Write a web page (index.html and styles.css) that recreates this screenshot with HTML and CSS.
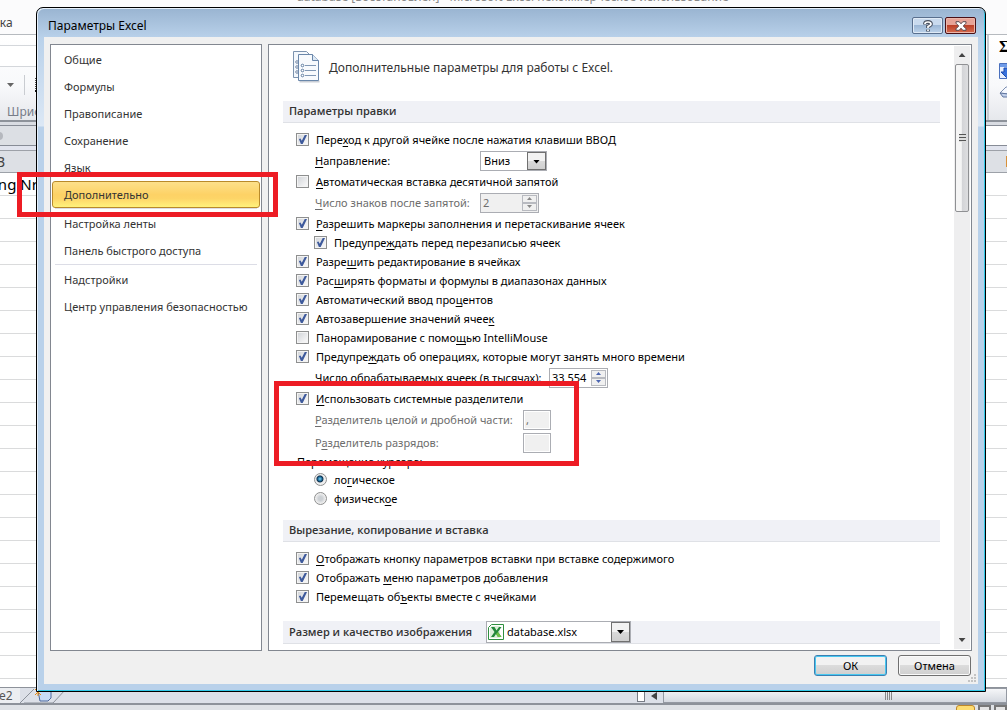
FILE: index.html
```html
<!DOCTYPE html>
<html lang="ru">
<head>
<meta charset="utf-8">
<title>Параметры Excel</title>
<link rel="stylesheet" href="styles.css">
</head>
<body>
<div class="app">
  <div class="app-top">
    <div class="app-title">database [восстановлен] - Microsoft Excel некоммерческое использование</div>
    <div class="app-tab">вка</div>
  </div>
  <div class="ribbon">
    <div class="ribbon-font">
      <div class="ribbon-combo"></div>
      <div class="ribbon-tools">
        <svg width="7" height="4" viewBox="0 0 7 4"><path d="M0 0h7L3.500 4z" fill="#666"/></svg>
        <i class="ribbon-sep"></i>
        <svg width="12" height="14" viewBox="0 0 12 14"><path d="M.5 0v12M4 .5h8M5 6.500h7" stroke="#555" stroke-dasharray="1 1" fill="none"/><path d="M0 13h12" stroke="#111" stroke-width="2"/></svg>
      </div>
      <div class="ribbon-caption">Шрифт</div>
    </div>
    <div class="ribbon-edit">
      <div class="sigma">Σ</div>
      <svg width="16" height="16" viewBox="0 0 16 16"><path d="M.5 .5h15v15H.5z" fill="#e8f0ff" stroke="#4a70bd"/><path d="M1 1h15v3H1z" fill="#6f9be8"/><path d="M5 5h5v4h3l-5.500 5.500L2 9h3z" fill="#3973dc" stroke="#1a4baf"/></svg>
      <svg width="16" height="12" viewBox="0 0 16 12"><path d="M1 7l6-6h8L9 8z" fill="#f5f8ff" stroke="#7d8fb1"/><path d="M1 7l8 1v3H4z" fill="#c2d0eb" stroke="#60769f"/></svg>
    </div>
  </div>
  <div class="formula-bar"><span class="knob"></span><span class="formula-field"></span></div>
  <div class="col-head"><span>B</span><i></i></div>
  <div class="sheet"><span>ing Nr</span></div>
  <div class="sheet-tabs">
    <span class="tab-name">le2</span>
    <svg class="tab-new" width="46" height="16" viewBox="0 0 46 16"><path d="M0 15L14 1M4 15h29L46 1" fill="none" stroke="#8c929b"/><path d="M18 3h13v7l-3 3h-8z" fill="#c9dcf6" stroke="#4c689c"/><path d="M15 1l3 3 3-3M15 7l3-3 3 3M18 1v7" stroke="#e58a14" fill="none"/></svg>
    <div class="hscroll"><i class="split"></i><svg width="6" height="8" viewBox="0 0 6 8"><path d="M6 0v8L0 4z" fill="#444"/></svg><div class="hthumb"><i></i></div></div>
  </div>
  <div class="status"><i class="view on"></i><i class="view"></i><i class="view"></i></div>
</div>

<div class="dialog" role="dialog" aria-labelledby="dlg-title">
  <div class="titlebar">
    <span id="dlg-title">Параметры Excel</span>
    <button class="win-btn help" aria-label="Справка"><svg width="10" height="12" viewBox="0 0 10 12"><path d="M2 4.500V3.500Q2.300 2 5 2T8 4Q8 5.300 5 6.500V8M5 9.500v2" fill="none" stroke="#4a5261" stroke-width="3.800"/><path d="M2 4V3.500Q2.300 2 5 2T8 4Q8 5.300 5 6.500V8M5 9.500v1.500" fill="none" stroke="#fff" stroke-width="1.700"/></svg></button>
    <button class="win-btn close" aria-label="Закрыть"><svg width="12" height="10" viewBox="0 0 12 10"><path d="M1 .7h3.200L6 2.800 7.800.7H11v1.500L8.300 5 11 7.800v1.500H7.800L6 7.200 4.200 9.300H1V7.800L3.700 5 1 2.200z" fill="#fff" stroke="#5a4a50"/></svg></button>
  </div>
  <div class="dlg-body">
    <div class="panes">
      <nav class="nav">
        <button>Общие</button>
        <button>Формулы</button>
        <button>Правописание</button>
        <button>Сохранение</button>
        <button>Язык</button>
        <button class="active">Дополнительно</button>
        <hr>
        <button>Настройка ленты</button>
        <button>Панель быстрого доступа</button>
        <hr>
        <button>Надстройки</button>
        <button>Центр управления безопасностью</button>
      </nav>
      <main class="options">
        <div class="content">
          <header class="intro">
            <svg width="30" height="33" viewBox="0 0 30 33"><path d="M1.500 1.500h13l4 4v22h-17z" fill="#f4f8fc" stroke="#7c93ae"/><g fill="none" stroke="#7c8eaa"><circle cx="5" cy="12" r="1.300"/><circle cx="5" cy="17" r="1.300"/><circle cx="5" cy="22" r="1.300"/></g><path d="M7.500 31.500h20" stroke="#c8cdd5" stroke-width="2"/><path d="M6.500 4.500h14l6 6v20h-20z" fill="#f7fafd" stroke="#6a87aa"/><path d="M20.500 4.500v6h6" fill="#dce8f4" stroke="#6a87aa"/><g fill="#fff" stroke="#5c7ba0"><circle cx="10.500" cy="15.500" r="1.300"/><circle cx="10.500" cy="20.500" r="1.300"/><circle cx="10.500" cy="25.500" r="1.300"/></g><path d="M13 15.500h11M13 20.500h11M13 25.500h11" stroke="#7f97b4"/></svg>
            <span>Дополнительные параметры для работы с Excel.</span>
          </header>

          <h2>Параметры правки</h2>
          <div class="group">
            <label class="row"><input type="checkbox" checked><span>Пере<u>х</u>од к другой ячейке после нажатия клавиши ВВОД</span></label>
            <div class="sub">
              <label class="w-short" for="dir"><u>Н</u>аправление:</label>
              <span class="combo combo-dir"><select id="dir"><option>Вниз</option></select><i class="arrow"></i></span>
            </div>
            <label class="row"><input type="checkbox"><span><u>А</u>втоматическая вставка десятичной запятой</span></label>
            <div class="sub off">
              <label class="w-short" for="digits"><u>Ч</u>исло знаков после запятой:</label>
              <span class="spin"><input id="digits" type="text" value="2" disabled><span class="arrows"><i class="up"></i><i class="down"></i></span></span>
            </div>
            <label class="row"><input type="checkbox" checked><span><u>Р</u>азрешить маркеры заполнения и перетаскивание ячеек</span></label>
            <label class="row nested"><input type="checkbox" checked><span>Предупре<u>ж</u>дать перед перезаписью ячеек</span></label>
            <label class="row"><input type="checkbox" checked><span>Разре<u>ш</u>ить редактирование в ячейках</span></label>
            <label class="row"><input type="checkbox" checked><span>Рас<u>ш</u>ирять форматы и формулы в диапазонах данных</span></label>
            <label class="row"><input type="checkbox" checked><span>Автоматический ввод про<u>ц</u>ентов</span></label>
            <label class="row"><input type="checkbox" checked><span>Автозавершение значений ячее<u>к</u></span></label>
            <label class="row"><input type="checkbox"><span>Панорамирование с помо<u>щ</u>ью IntelliMouse</span></label>
            <label class="row"><input type="checkbox" checked><span>Предупре<u>ж</u>дать об операциях, которые могут занять много времени</span></label>
            <div class="sub">
              <label class="w-long" for="cells">Число обрабатываемых ячеек (в тысячах):</label>
              <span class="spin"><input id="cells" type="text" value="33 554"><span class="arrows"><i class="up"></i><i class="down"></i></span></span>
            </div>
            <label class="row"><input type="checkbox" checked><span><u>И</u>спользовать системные разделители</span></label>
            <div class="sub off">
              <label class="w-mid" for="dec"><u>Р</u>азделитель целой и дробной части:</label>
              <input class="tiny" id="dec" type="text" value="," disabled>
            </div>
            <div class="sub off">
              <label class="w-mid" for="thou">Р<u>а</u>зделитель разрядов:</label>
              <input class="tiny" id="thou" type="text" value="" disabled>
            </div>
            <div class="caption">Перемещение курсора:</div>
            <label class="row nested"><input type="radio" name="cursor" checked><span>ло<u>г</u>ическое</span></label>
            <label class="row nested"><input type="radio" name="cursor"><span>физическ<u>о</u>е</span></label>
          </div>

          <h2>Вырезание, копирование и вставка</h2>
          <div class="group">
            <label class="row"><input type="checkbox" checked><span><u>О</u>тображать кнопку параметров вставки при вставке содержимого</span></label>
            <label class="row"><input type="checkbox" checked><span>Отображать <u>м</u>еню параметров добавления</span></label>
            <label class="row"><input type="checkbox" checked><span>Перемещать об<u>ъ</u>екты вместе с ячейками</span></label>
          </div>

          <h2 class="with-combo"><label for="book">Размер и качество изображения</label>
            <span class="combo combo-book">
              <svg width="16" height="16" viewBox="0 0 16 16"><path d="M3.500 .5h12v15H.5v-12z" fill="#fff" stroke="#2f8f3f"/><path d="M2 4l2-2h8v12H2z" fill="#dcefd9"/><path d="M3 3h3.500l2 3.500L11 3h2.500L10 8l3.500 5H10L8 10l-2 3H3l3.500-5z" fill="#23883a"/><path d="M10 8l3.500 5H10L8 10z" fill="#6cbf45"/></svg>
              <select id="book"><option>database.xlsx</option></select><i class="arrow"></i>
            </span>
          </h2>
        </div>
        <div class="scrollbar"><i class="sb-up"></i><div class="sb-thumb"><i></i></div><i class="sb-down"></i></div>
      </main>
    </div>
    <footer class="actions">
      <button class="btn primary">ОК</button>
      <button class="btn">Отмена</button>
      <svg class="grip" width="9" height="9" viewBox="0 0 9 9"><path d="M6 0h2v2H6zM3 3h2v2H3zM6 3h2v2H6zM0 6h2v2H0zM3 6h2v2H3zM6 6h2v2H6z" fill="#c3c3c3"/></svg>
    </footer>
  </div>
</div>
<div class="mark mark-nav"></div>
<div class="mark mark-sep"></div>
</body>
</html>
```

FILE: styles.css
```css
* { box-sizing: border-box; }
html, body { height: 100%; margin: 0; }
body {
  position: relative;
  overflow: hidden;
  font: 11px/16px "Noto Sans", "Open Sans", sans-serif;
  color: #000;
  background: #fff;
}
button, input, select { font: inherit; color: inherit; margin: 0; }
svg, i { display: block; flex: none; }

/* Spreadsheet window in the background */
.app { height: 100%; display: flex; flex-direction: column; }
.app-top { height: 35px; background: #fbfbfc; border-bottom: 1px solid #b6babf; display: flex; flex-direction: column; flex: none; }
.app-title { margin-top: -11px; height: 16px; text-align: center; color: #8a8a8a; font-size: 12px; padding-left: 18px; }
.app-tab { margin: 10px 0 0 -7px; font-size: 12px; color: #444; }
.ribbon { height: 87px; flex: none; display: flex; justify-content: space-between; background: linear-gradient(#fff, #f8f9fb 60%, #e6e8ec); border-bottom: 2px solid #8d929a; }
.ribbon-font { width: 60px; padding-top: 10px; }
.ribbon-combo { height: 22px; background: #fff; border: solid #d4d7db; border-width: 1px 0; }
.ribbon-tools { height: 36px; display: flex; align-items: center; gap: 10px; padding-left: 7px; }
.ribbon-sep { width: 1px; height: 20px; background: #c9ccd1; }
.ribbon-caption { padding-left: 7px; color: #777c88; font-size: 12px; line-height: 18px; }
.ribbon-edit { width: 20px; padding: 3px 0 0 10px; border-left: 2px solid #c6cad1; display: flex; flex-direction: column; gap: 7px; overflow: hidden; }
.sigma { font: bold 16px/18px "Liberation Serif", serif; }
.formula-bar { height: 28px; flex: none; display: flex; border-top: 3px solid #d9dce2; border-bottom: 4px solid #e1e4ee; background: #dcdfe4; box-shadow: inset 0 1px #878c96, inset 0 -1px #878c96; }
.knob { width: 8px; height: 8px; margin: 7px 0 0 -5px; border-radius: 4px; background: #b5b8be; }
.formula-field { flex: 1; margin: 1px 0 1px 60px; background: #fff; }
.col-head { height: 23px; flex: none; display: flex; justify-content: space-between; align-items: center; background: #dde0e5; border: solid #9da1a8; border-width: 1px 0; font-size: 14px; color: #444; }
.col-head span { margin-left: -4px; }
.col-head i { width: 1px; height: 11px; background: #d8913a; }
.sheet { flex: 1; overflow: hidden; background: repeating-linear-gradient(#fff 0 22px, #dadbdc 22px 23px); font-size: 15px; line-height: 23px; }
.sheet span { margin-left: -6px; }
.sheet-tabs { height: 18px; flex: none; display: flex; background: #dce0e8; border: solid #8d929a; border-width: 1px 0; border-bottom-width: 2px; }
.tab-name { width: 24px; margin-left: -4px; font-size: 12px; line-height: 15px; color: #555; background: #eceef1; }
.hscroll { margin-left: auto; width: 370px; display: flex; align-items: center; gap: 6px; }
.split { width: 8px; height: 12px; background: #fff; border: 1px solid #777c85; }
.hthumb { flex: 1; height: 15px; border: 1px solid #9499a2; background: linear-gradient(#f5f6f8, #d5d9e0); display: flex; justify-content: center; align-items: center; padding-left: 106px; }
.hthumb i { width: 7px; height: 8px; background: repeating-linear-gradient(90deg, #888 0 1px, transparent 1px 2px); }
.status { height: 5px; flex: none; display: flex; justify-content: flex-end; gap: 3px; background: #dfe2e6; overflow: hidden; }
.view { width: 13px; height: 12px; border: 2px solid #777; background: #e4e4e4; }
.view.on { width: 19px; border: 1px solid #bd872a; border-radius: 3px; background: #fddc71; }

/* Dialog window */
.dialog {
  position: absolute; inset: 7px 21px 18px 36px;
  display: flex; flex-direction: column;
  border: 1px solid #000; border-radius: 7px 7px 0 0;
  background: linear-gradient(#99b4d1, #b9d1ea 30px, #dce8f5 118px, #b9d1ea 119px);
  box-shadow: inset 1px 1px #e6f0fa, inset -1px -1px #31c9e8;
}
.titlebar { height: 29px; flex: none; display: flex; align-items: flex-start; gap: 2px; padding: 9px 9px 0 11px; }
.titlebar span { flex: 1; font-size: 12px; line-height: 18px; }
.win-btn { width: 31px; height: 17px; padding: 0; display: flex; align-items: center; justify-content: center; border: 1px solid #596f8e; border-radius: 2px; background: linear-gradient(#c9daee 50%, #9cb7d6 50%, #bdd3ea); box-shadow: inset 0 0 0 1px #dfeaf6; }
.close { border-color: #4a1016; background: linear-gradient(#e7a397 50%, #bc4028 50%, #d66c50); box-shadow: inset 0 0 0 1px #ebb6aa; }
.dlg-body { flex: 1; min-height: 0; margin: 0 7px 7px; padding: 7px 6px 0; display: flex; flex-direction: column; background: #f0f0f0; }
.panes { flex: 1; min-height: 0; display: flex; gap: 6px; }
.nav { width: 212px; flex: none; padding: 1px; border: 1px solid #828790; background: #fff; }
.nav button { display: block; width: 100%; height: 27px; padding: 0 0 0 11px; border: 1px solid transparent; border-radius: 3px; background: none; text-align: left; color: #333; }
.nav .active { border-color: #b98a2a; background: linear-gradient(#fde08a, #fdd266 50%, #fdd467 65%, #fff27c); }
.nav hr { height: 1px; margin: 0 3px 1px; border: 0; background: #dcdde6; }
.options { flex: 1; min-width: 0; display: flex; padding: 1px 1px 1px 14px; border: 1px solid #828790; background: #fff; }
.content { flex: 1; min-width: 0; overflow: hidden; }
.intro { height: 55px; padding: 4px 0 0 9px; display: flex; align-items: flex-start; gap: 7px; }
.intro span { padding-top: 10px; font-size: 12px; color: #333; }
h2 { height: 22px; margin: 0; padding: 0 6px 1px; display: flex; align-items: center; font: 600 11px/16px "Open Sans", "Noto Sans", sans-serif; color: #333; background: #f0f1f6; border-bottom: 1px solid #dfe1e6; }
.group { padding: 7px 0 12px 13px; }
.row { display: flex; align-items: center; gap: 7px; height: 19px; }
.nested { padding-left: 18px; }
.sub { display: flex; align-items: center; height: 23px; padding-left: 19px; }
.off { color: #6d6d6d; }
.w-short { width: 165px; }
.w-mid { width: 208px; }
.w-long { width: 234px; }
.caption { height: 16px; padding-left: 1px; }
u { text-underline-offset: 2px; }

input[type="checkbox"], input[type="radio"] { appearance: none; flex: none; width: 13px; height: 13px; }
input[type="checkbox"] { position: relative; border: 1px solid #8e8f8f; background: linear-gradient(135deg, #cfd2d6, #f4f4f5 80%); box-shadow: inset 0 0 0 1px #f4f4f4; }
input[type="checkbox"]:checked::after { content: ""; position: absolute; inset: 1px; background: #3e5a9c; clip-path: polygon(10% 45%, 28% 40%, 42% 64%, 75% 0, 100% 0, 52% 100%, 32% 100%); }
input[type="radio"] { border: 1px solid #8e8f8f; border-radius: 50%; background: radial-gradient(circle, #ccd0d4 2px, #eee 5px); }
input[type="radio"]:checked { background: radial-gradient(circle at 45% 45%, #7fd5f5 0, #1c6c9c 2px, #10314d 3px, #eee 4px); }

.combo { position: relative; display: flex; align-items: center; height: 20px; border: 1px solid #abadb3; background: #fff; }
.combo select { appearance: none; flex: 1; min-width: 0; height: 18px; padding: 0 18px 0 3px; border: 0; background: none; outline: 0; }
.combo-dir { width: 67px; }
.arrow { position: absolute; top: 0; right: 0; bottom: 0; width: 19px; border: 1px solid #707070; background: linear-gradient(#f2f2f2 50%, #dadada 50%, #cfcfcf); pointer-events: none; }
.arrow::after { content: ""; display: block; margin: 7px auto 0; width: 7px; height: 4px; background: #000; clip-path: polygon(0 0, 100% 0, 50% 100%); }
.spin { display: flex; width: 59px; height: 20px; border: 1px solid #abadb3; background: #fff; }
.spin input { flex: 1; min-width: 0; padding: 0 2px; border: 0; background: none; outline: 0; }
.off .spin { background: #f0f0f0; }
.arrows { width: 15px; margin: 1px; display: flex; flex-direction: column; }
.arrows i { flex: 1; display: flex; align-items: center; justify-content: center; border: 1px solid #b8bac0; background: #f0f0f0; }
.arrows i::after { content: ""; width: 5px; height: 3px; background: #4a64b0; }
.off .arrows i::after { background: #888; }
.up::after { clip-path: polygon(50% 0, 100% 100%, 0 100%); }
.down::after { clip-path: polygon(0 0, 100% 0, 50% 100%); }
.tiny { width: 28px; height: 20px; padding: 0 2px; border: 1px solid #abadb3; background: #f0f0f0; box-shadow: inset 0 0 0 1px #fff; }
.with-combo { height: 23px; margin-top: 3px; padding-bottom: 0; }
.with-combo label { width: 197px; }
.combo-book { width: 145px; height: 22px; padding-left: 1px; font: 11px/16px "Noto Sans", "Open Sans", sans-serif; color: #000; }

.scrollbar { width: 16px; flex: none; margin-left: 14px; display: flex; flex-direction: column; align-items: center; background: #eeeeef; }
.sb-up, .sb-down { width: 7px; height: 4px; background: #444; }
.sb-up { margin: 7px 0; clip-path: polygon(50% 0, 100% 100%, 0 100%); }
.sb-down { margin: auto 0 7px; clip-path: polygon(0 0, 100% 0, 50% 100%); }
.sb-thumb { width: 14px; height: 148px; display: flex; align-items: center; justify-content: center; border: 1px solid #8f9093; border-radius: 2px; background: linear-gradient(90deg, #f5f5f5 45%, #d3d4d7 50%, #dedee0); }
.sb-thumb i { width: 7px; height: 8px; background: repeating-linear-gradient(#555 0 1px, #ddd 1px 3px); }

.actions { position: relative; height: 33px; flex: none; display: flex; justify-content: flex-end; align-items: flex-start; gap: 11px; padding: 4px 1px 0 0; }
.btn { width: 73px; height: 21px; padding: 0; border: 1px solid #707070; border-radius: 3px; background: linear-gradient(#f2f2f2 50%, #dcdcdc 50%, #cfcfcf); box-shadow: inset 0 0 0 1px #fafafa; }
.primary { border-color: #3c7fb1; box-shadow: inset 0 0 0 1px #48c8f0; }
.grip { position: absolute; right: -5px; bottom: 1px; }

/* Red highlight frames */
.mark { position: absolute; border: 5px solid #ed1c24; pointer-events: none; }
.mark-nav { left: 17px; top: 172px; width: 261px; height: 45px; }
.mark-sep { left: 274px; top: 381px; width: 305px; height: 85px; }
```
